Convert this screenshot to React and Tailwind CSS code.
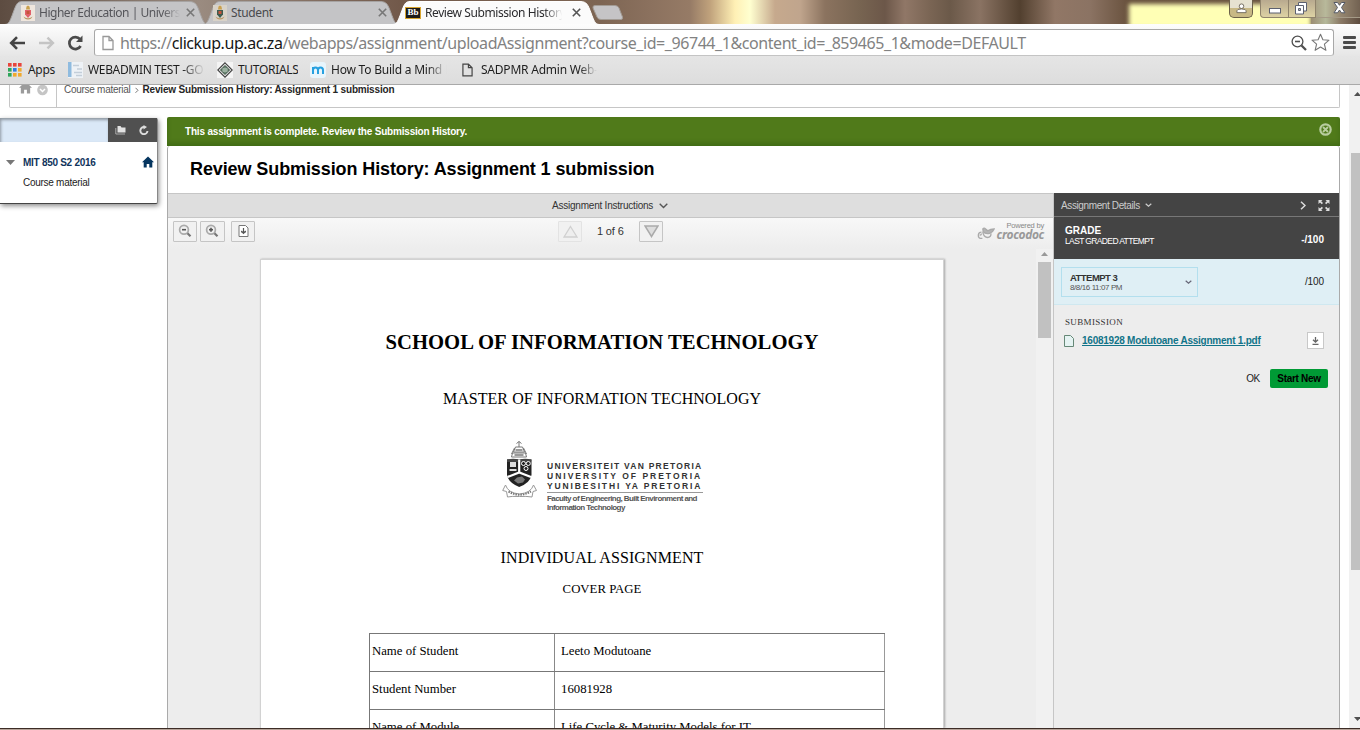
import React from "react";

const arial = "font-['Liberation_Sans',Arial,sans-serif]";
const times = "font-['Liberation_Serif',serif]";

function Tab({ width, active, icon, label, labelClass, closeClass, className }) {
  return (
    <div className={`relative h-[23px] shrink-0 ${className}`} style={{ width }}>
      <svg className="absolute inset-0" width={width} height="24" viewBox={`0 0 ${width} 24`}>
        <path
          d={`M0 23.5 C4 23 5 20 8 12 C11 4 12 0.5 17 0.5 H${width - 19} C${width - 12} 0.5 ${width - 11} 4 ${width - 8} 12 C${width - 5} 20 ${width - 4} 23 ${width} 23.5 Z`}
          fill={active ? "#fbfbfb" : "#c4c4c6"}
          stroke={active ? "#ffffff" : "#a6a3a2"}
        />
      </svg>
      <div className="relative flex h-full items-center pl-[16px]">
        {icon}
        <span className={`ml-[4px] overflow-hidden whitespace-nowrap text-[12px] leading-[18px] ${labelClass}`}>{label}</span>
        <svg className={closeClass} width="9" height="9" viewBox="0 0 9 9" stroke={active ? "#555" : "#777"} strokeWidth="1.6">
          <path d="M0.8 0.8 L8.2 8.2 M8.2 0.8 L0.8 8.2" />
        </svg>
      </div>
    </div>
  );
}

function CrestIcon({ body, bg }) {
  return (
    <svg className="shrink-0" width="14" height="16" viewBox="0 0 14 16">
      <rect width="14" height="16" fill={bg} />
      <path d="M5.500 1.500 L7 .5 L8.500 1.500 L9 4.500 H5Z" fill="#c9a04d" />
      <path d="M4 5 h6 v4.500 l-3 3.500 l-3-3.500z" fill={body} />
      <path d="M5.500 6 h3 v3 h-3z" fill="#c4553a" />
      <path d="M2.500 11.500 q1 3 4.500 3 q3.500 0 4.500-3 l-1.500 1 q-3 1.500-6 0z" fill="#b99868" />
    </svg>
  );
}

function PageIcon({ w = 12, h = 15, stroke = "#777", fill = "none" }) {
  return (
    <svg className="shrink-0" width={w} height={h} viewBox="0 0 12 15" fill={fill} stroke={stroke} strokeWidth="1.3">
      <path d="M1 1 H7 L11 5 V14 H1 Z M7 1 V5 H11" />
    </svg>
  );
}

function TitleBar() {
  return (
    <div className="relative flex h-6 shrink-0 items-start overflow-hidden bg-[linear-gradient(90deg,#5d4c41_0px,#9a8b80_200px,#72594a_400px,#7d6553_600px,#8b715e_650px,#967b66_690px,#c0a27c_710px,#fff0b5_735px,#ffffd0_750px,#c6a98d_775px,#c0a58d_800px,#8b735f_825px,#776451_860px,#6c5749_885px,#907767_905px,#7a6554_930px,#6b5949_950px,#8a7363_980px,#52402f_1020px,#917766_1055px,#8b7363_1090px,#69523e_1128px,#65503d_1360px)] pl-[5px] pt-px">
      <div className="absolute left-[1129px] top-[4px] h-[24px] w-[182px] bg-[#ffffb5] blur-[2px]" />
      <div className="absolute right-0 top-0 h-[24px] w-[49px] bg-[linear-gradient(90deg,#9b8d73,#b4b89a_30%,#8b7a66_60%,#5d4b3e)]" />
      <Tab width={203} className="mr-[-5px]" icon={<CrestIcon body="#e0606a" bg="#efe6dd" />} label="Higher Education | Univers" labelClass="w-[141px] tracking-[-0.48px] text-[#55555a] [mask-image:linear-gradient(90deg,#000_88%,transparent)]" closeClass="ml-[6px]" />
      <Tab width={196} className="mr-[-6px]" icon={<div className="-ml-[6px]"><CrestIcon body="#3d5c50" bg="#d8d2c8" /></div>} label="Student" labelClass="w-[141px] tracking-[-0.35px] text-[#4a4a4d]" closeClass="ml-[6px]" />
      <Tab
        width={206}
        active
        className="z-10"
        icon={
          <div className={`-ml-[4px] flex h-[12px] w-[16px] shrink-0 items-center justify-center border border-[#d8a52e] bg-[#1c1a18] text-[9px] font-bold leading-none text-white ${times}`}>Bb</div>
        }
        label="Review Submission History"
        labelClass="w-[140px] tracking-[-0.42px] text-[#2b2b2e] [mask-image:linear-gradient(90deg,#000_85%,transparent_98%)]"
        closeClass="ml-[7px]"
      />
      <svg className="-ml-[8px] mt-[4px] shrink-0" width="34" height="17" viewBox="0 0 34 17">
        <path d="M4 0.500 H24 Q27 0.500 28 3 L31.500 12 Q32 14.500 30 14.500 H10 Q7 14.500 6 12 L2 3 Q1.500 0.500 4 0.500Z" fill="#c5c4c6" stroke="#a29b94" />
      </svg>
      <div className="absolute right-0 top-0 flex h-[18px]">
        <div className="mr-[7px] flex h-[18px] w-6 items-center justify-center rounded-b-[5px] border border-t-0 border-[#6b6049] bg-[linear-gradient(#e6e2d0_45%,#c8b985_50%)]">
          <svg className="mb-px" width="11" height="11" viewBox="0 0 12 12" fill="#fff" stroke="#6c6659" strokeWidth="1">
            <circle cx="6" cy="3.500" r="2.500" /><path d="M1 10.500 V8.500 Q1 6.500 6 6.500 Q11 6.500 11 8.500 V10.500 Z" />
          </svg>
        </div>
        <div className="flex h-[18px] w-[29px] items-end justify-center rounded-bl-[4px] border border-t-0 border-[#8f836c] bg-[linear-gradient(#b8a98f,#ddd2a4)] pb-[3px]">
          <svg width="12" height="6" viewBox="0 0 12 6"><rect x=".5" y=".5" width="11" height="4.500" fill="#fff" stroke="#5c6070" /></svg>
        </div>
        <div className="flex h-[18px] w-[27px] items-center justify-center border-b border-r border-[#8f836c] bg-[linear-gradient(#b8a98f,#ddd2a4)] pb-px pr-[2px]">
          <svg width="12" height="13" viewBox="0 0 12 13" fill="#fff" stroke="#5c6070"><path d="M3.500 .5 H11.500 V9 H3.500Z" /><path d="M.5 3.500 H8.500 V12 H.5Z" /><path d="M3.500 6.500 h2 v2 h-2z" fill="#bbb" /></svg>
        </div>
        <div className="flex h-[18px] w-[44px] items-center justify-center border-b border-[#a59a87] bg-[#c9bda0]/20 pb-[2px] pl-[3px]">
          <svg width="13" height="12" viewBox="0 0 13 12" fill="#fff" stroke="#555a66"><path d="M1 .5 H4.500 L6.500 3.300 L8.500 .5 H12 L8.500 5.500 L12 10.800 H8.500 L6.500 8 L4.500 10.800 H1 L4.500 5.500Z" /></svg>
        </div>
      </div>
    </div>
  );
}

function AddressBar() {
  return (
    <div className="flex h-[32px] shrink-0 items-end bg-[linear-gradient(#fdfdfd,#e6e6e6)]">
      <div className="flex h-[27px] w-[94px] shrink-0 items-center pl-[9px]">
        <svg width="17" height="14" viewBox="0 0 17 14" fill="none" stroke="#444" strokeWidth="2.600"><path d="M16 7 H2.500 M8 1.200 L2.200 7 L8 12.800" /></svg>
        <svg className="ml-[13px]" width="16" height="14" viewBox="0 0 17 14" fill="none" stroke="#c4c4c4" strokeWidth="2.600"><path d="M0 7 H14 M9 1.200 L14.800 7 L9 12.800" /></svg>
        <svg className="ml-[12px]" width="17" height="16" viewBox="0 0 17 16" fill="none" stroke="#4a4a4a" strokeWidth="2.700"><path d="M13.600 11 A6 6 0 1 1 13 4.200" /><path d="M15.500 0.500 V7 H9Z" fill="#4a4a4a" stroke="none" /></svg>
      </div>
      <div className="flex h-[27px] w-[1240px] shrink-0 items-center rounded-[3px] border border-[#a8a8a8] border-b-[#c4c4c4] bg-white pl-[7px] pr-[3px]">
        <PageIcon stroke="#999" w={12} h={16} />
        <span className="ml-[6px] flex-1 whitespace-nowrap text-[16px] leading-[24px] tracking-[-0.43px] text-[#828282]">
          https://<span className="text-[#161616]">clickup.up.ac.za</span>/webapps/assignment/uploadAssignment?course_id=_96744_1&amp;content_id=_859465_1&amp;mode=DEFAULT
        </span>
        <svg width="16" height="16" viewBox="0 0 16 16" fill="none" stroke="#505050"><circle cx="6.500" cy="6.500" r="5.400" strokeWidth="1.300" /><path d="M4 6.500 H9" strokeWidth="1.600" /><path d="M10.500 10.500 L15 15" strokeWidth="2.300" /></svg>
        <svg className="ml-[4px]" width="19" height="19" viewBox="0 0 19 19" fill="#fff" stroke="#777" strokeWidth="1.100" strokeLinejoin="round"><path d="M9.500 1.200 L11.900 6.800 L18 7.200 L13.400 11.200 L14.900 17.300 L9.500 14 L4.100 17.300 L5.600 11.200 L1 7.200 L7.100 6.800Z" /></svg>
      </div>
      <div className="flex h-[27px] items-center pl-[9px]">
        <svg width="13" height="13" viewBox="0 0 13 13" fill="#4b4b4b"><rect width="13" height="3" rx="1" /><rect y="5" width="13" height="3" rx="1" /><rect y="10" width="13" height="3" rx="1" /></svg>
      </div>
    </div>
  );
}

const appDots = ["#e8453c", "#e8453c", "#e8453c", "#2ea65a", "#2f7de1", "#f0a92e", "#2ea65a", "#f0a92e", "#f0a92e"];

function Bookmarks() {
  const item = "overflow-hidden whitespace-nowrap text-[12px] leading-[18px]";
  return (
    <div className="flex h-[29px] shrink-0 items-center border-b border-[#a9a9a9] bg-[linear-gradient(#e5e5e5,#dddddd)] pl-[8px] text-[#1e1e1e]">
      <svg width="14" height="14" viewBox="0 0 14 14">
        {appDots.map((c, i) => <rect key={i} x={(i % 3) * 5} y={Math.floor(i / 3) * 5} width="3.600" height="3.600" fill={c} />)}
      </svg>
      <span className={`ml-[6px] w-[28px] tracking-[-0.3px] ${item}`}>Apps</span>
      <svg className="ml-[12px] shrink-0" width="15" height="16" viewBox="0 0 15 16"><rect width="15" height="16" fill="#eef2f6" /><rect width="3.500" height="15" fill="#8fbbdf" /><path d="M5 3.500 h6 M9 7 h5 M6 10.500 h8 M8 13.500 h6" stroke="#c3ced9" strokeWidth="1.500" /></svg>
      <span className={`ml-[5px] w-[117px] tracking-[-0.34px] [mask-image:linear-gradient(90deg,#000_80%,transparent)] ${item}`}>WEBADMIN TEST -GO</span>
      <svg className="ml-[12px] shrink-0" width="16" height="16" viewBox="0 0 16 16"><rect width="16" height="16" fill="#f4f4f4" /><path d="M8 .8 L15.200 8 L8 15.200 L.8 8Z" fill="#f3f3f3" stroke="#444" strokeWidth="1.200" /><path d="M8 3.500 L12.500 8 L8 12.500 L3.500 8Z" fill="#6d8b76" stroke="#2f4437" /><path d="M5.500 7 h5 M5.500 9 h5" stroke="#dfe8e1" strokeWidth=".8" /></svg>
      <span className={`ml-[5px] w-[60px] tracking-[-0.3px] ${item}`}>TUTORIALS</span>
      <svg className="ml-[12px] shrink-0" width="16" height="16" viewBox="0 0 16 16"><rect width="16" height="16" rx="3" fill="#e8f5fc" /><path d="M3 12 V5 M3 8 Q3 5.500 5.500 5.500 Q8 5.500 8 8 V12 M8 8 Q8 5.500 10.500 5.500 Q13 5.500 13 8 V12" fill="none" stroke="#26a0e0" strokeWidth="2" /></svg>
      <span className={`ml-[5px] w-[118px] tracking-[-0.22px] [mask-image:linear-gradient(90deg,#000_82%,transparent_98%)] ${item}`}>How To Build a Mind M</span>
      <div className="ml-[13px]"><PageIcon w={11} h={14} stroke="#444" /></div>
      <span className={`ml-[8px] w-[116px] tracking-[-0.22px] [mask-image:linear-gradient(90deg,#000_85%,transparent)] ${item}`}>SADPMR Admin Web-</span>
    </div>
  );
}

function HomeIcon({ color, size = 12 }) {
  return (
    <svg width={size} height={size} viewBox="0 0 12 12" fill={color}><path d="M6 0.500 L12 6.300 H10.300 V11.500 H7.300 V8 H4.700 V11.500 H1.700 V6.300 H0Z" /></svg>
  );
}

function Breadcrumb() {
  return (
    <div className="ml-[9px] flex h-[23px] w-[1331px] overflow-hidden rounded-b-[2px] border border-t-0 border-[#c6c6c6] bg-white">
      <div className="flex w-[47px] items-start border-r border-[#c6c6c6] pl-[9px]">
        <div className="-mt-[4px]"><HomeIcon color="#9b9b9b" size={13} /></div>
        <svg className="ml-[5px]" width="11" height="11" viewBox="0 0 11 11"><circle cx="5.500" cy="5" r="5.300" fill="#c5c5c5" /><path d="M3 4 L5.500 6.500 L8 4" fill="none" stroke="#fff" strokeWidth="1.500" /></svg>
      </div>
      <div className="flex h-[10px] items-center pl-[7px] text-[10px] leading-[12px]">
        <span className="whitespace-nowrap tracking-[-0.27px] text-[#555]">Course material</span>
        <svg className="mx-[4px]" width="4" height="7" viewBox="0 0 4 7" fill="none" stroke="#777"><path d="M.5 .8 L3 3.300 L.5 5.800" /></svg>
        <span className="whitespace-nowrap font-bold tracking-[-0.18px] text-[#262626]">Review Submission History: Assignment 1 submission</span>
      </div>
    </div>
  );
}

function Sidebar() {
  return (
    <div className="mt-px h-[86px] w-[158px] shrink-0 rounded-r-[2px] border-b border-r border-b-[#444] border-r-[#888] bg-white shadow-[1px_2px_5px_rgba(0,0,0,0.45)]">
      <div className="flex h-6">
        <div className="w-[108px] bg-[#dae8f7] shadow-[inset_1px_2px_3px_rgba(0,0,0,0.35)]" />
        <div className="flex flex-1 items-center bg-[#505050] pl-[7px]">
          <svg className="mb-px" width="11" height="10" viewBox="0 0 11 10" fill="#e2e2e2"><path d="M2.500 1 H5.500 L6.500 2.500 H10.500 V7.500 H2.500Z" /><path d="M.8 3 V9 H10" fill="none" stroke="#aaa" /></svg>
          <svg className="ml-[13px]" width="10" height="10" viewBox="0 0 10 10" fill="none" stroke="#ddd" strokeWidth="1.900"><path d="M8.500 6 A3.600 3.600 0 1 1 5 2" /><path d="M4.500 0 L8 2 L4.500 4.500Z" fill="#ddd" stroke="none" /></svg>
        </div>
      </div>
      <div className="mt-[12px] flex h-[17px] items-center pl-[6px]">
        <svg width="9" height="5" viewBox="0 0 9 5"><path d="M0 0 H9 L4.500 5Z" fill="#777" /></svg>
        <span className="ml-[8px] flex-1 whitespace-nowrap text-[10px] font-bold tracking-[-0.28px] text-[#10345c]">MIT 850 S2 2016</span>
        <div className="mb-px mr-[3px]"><HomeIcon color="#05355f" size={12} /></div>
      </div>
      <div className="mt-[4px] pl-[23px] text-[10px] leading-[15px] tracking-[-0.27px] text-[#222]">Course material</div>
    </div>
  );
}

function ToolButton({ width, faded, children }) {
  return (
    <div className={`flex h-[21px] items-center justify-center rounded-[1px] border bg-[#f1f1f1] ${faded ? "border-[#e3e3e3]" : "border-[#c5c5c5]"}`} style={{ width }}>
      {children}
    </div>
  );
}

function Magnifier({ plus }) {
  return (
    <svg className="-ml-px -mt-px" width="14" height="14" viewBox="0 0 14 14" fill="none"><circle cx="6" cy="5.700" r="4.400" fill="#f0f0f0" stroke="#aaa" strokeWidth="1.700" /><path d="M4 5.700 H8" stroke="#555" strokeWidth="1.600" />{plus && <path d="M6 3.700 V7.700" stroke="#555" strokeWidth="1.600" />}<path d="M9.500 9.200 L12.500 12.200" stroke="#777" strokeWidth="2.200" /></svg>
  );
}

function UniversityCrest() {
  return (
    <svg className="shrink-0" width="36" height="58" viewBox="0 0 36 58">
      <g fill="none" stroke="#777" strokeWidth="1">
        <path d="M17 0.500 V6 M14.500 2.500 L17 .5 L19.500 2.500 M13.500 6 H20.500 L22.500 11 H11.500Z M10.500 12 H23.500 L24.500 16 H9.500Z M12.500 7 L9.500 13 M21.500 7 L24.500 13" />
        <path d="M13.500 9 H20.500 M12.500 14 H21.500" strokeWidth="2" stroke="#999" />
      </g>
      <path d="M5 18.500 H29.500 V34 Q28 42 17.200 46 Q6.500 42 5 34Z" fill="#222" />
      <path d="M5 18.500 Q11 17 17.200 18.500 Q23 17 29.500 18.500 L29 21 H5Z" fill="#444" />
      <path d="M8 21 h6 v5 h-6z M7.500 28 h7 v2 h-7z" fill="#ddd" />
      <circle cx="21.500" cy="22.500" r="2" stroke="#fff" fill="none" /><circle cx="26.300" cy="22.500" r="2" stroke="#fff" fill="none" /><circle cx="24" cy="27.500" r="2" stroke="#fff" fill="none" />
      <path d="M5.500 36 L17.200 31.500 L29 36 M17.200 18.500 V32" stroke="#fff" strokeWidth="2.200" fill="none" />
      <path d="M12 39.500 l3-3 5-1 3 3 -2 3 -5 1z" fill="#777" />
      <path d="M3.500 44 Q6 52 17.500 53 Q29 52 31.500 44 L34.500 49.500 L31 50.500 L30 56 Q24 55 17.500 55.500 Q10 55 5.500 56 L4.500 50.500 L0.700 49.500Z" fill="#fff" stroke="#999" />
      <path d="M6.500 50.500 Q17 57 29 50.500" fill="none" stroke="#777" strokeWidth="2" strokeDasharray="1.500 1" />
    </svg>
  );
}

function UniversityLogo() {
  return (
    <div className="mt-[31px] flex h-[75px] pl-[241px]">
      <UniversityCrest />
      <div className={`ml-[9px] mt-[20px] w-[156px] text-[#333] ${arial}`}>
        <div className="flex flex-col border-b border-[#999] pb-px text-[8.500px] font-bold leading-[10px]">
          <span className="whitespace-nowrap tracking-[1.24px]">UNIVERSITEIT VAN PRETORIA</span>
          <span className="whitespace-nowrap tracking-[2px]">UNIVERSITY OF PRETORIA</span>
          <span className="whitespace-nowrap tracking-[1.84px]">YUNIBESITHI YA PRETORIA</span>
        </div>
        <div className="mt-px whitespace-nowrap text-[8px] font-bold leading-[9px] tracking-[-0.58px] text-[#555]">
          Faculty of Engineering, Built Environment and
          <br />
          Information Technology
        </div>
      </div>
    </div>
  );
}

const rows = [
  ["Name of Student", "Leeto Modutoane"],
  ["Student Number", "16081928"],
  ["Name of Module", "Life Cycle & Maturity Models for IT"],
];

function DocumentPage() {
  return (
    <div className={`ml-[92px] h-[469px] w-[684px] overflow-hidden border border-b-0 border-[#d2d2d2] bg-white text-black shadow-[1px_0_2px_rgba(0,0,0,0.3)] ${times}`}>
      <div className="mt-[69px] whitespace-nowrap text-center text-[20.670px] font-bold leading-[26px]">SCHOOL OF INFORMATION TECHNOLOGY</div>
      <div className="mt-[33px] whitespace-nowrap text-center text-[16px] leading-[22px] tracking-[0.05px]">MASTER OF INFORMATION TECHNOLOGY</div>
      <UniversityLogo />
      <div className="mt-[31px] whitespace-nowrap text-center text-[16px] leading-[22px] tracking-[0.1px]">INDIVIDUAL ASSIGNMENT</div>
      <div className="mt-[11px] whitespace-nowrap text-center text-[12.800px] leading-[18px]">COVER PAGE</div>
      <div className="ml-[108px] mt-[35px] w-[516px] border-l border-t border-[#777]">
        {rows.map(([name, value]) => (
          <div key={name} className="flex h-[38px] border-b border-[#777] text-[12.750px] leading-[34px]">
            <div className="w-[185px] whitespace-nowrap border-r border-[#888] pl-[2px]">{name}</div>
            <div className="flex-1 whitespace-nowrap border-r border-[#999] pl-[6px]">{value}</div>
          </div>
        ))}
      </div>
    </div>
  );
}

function Crocodoc() {
  return (
    <div className="mr-[9px] mt-[4px] flex w-[67px] shrink-0 items-start justify-between text-[#999]">
      <svg className="mt-[4px] shrink-0" width="18" height="14" viewBox="0 0 20 15" fill="none" stroke="#aaa" strokeWidth="1.500"><path d="M6 13.500 Q1 14 1.500 9.500 Q2 6.500 5 6.500 M3 10 Q5 10 5 8" /><path d="M6.500 3 Q8 1 10 3.500 L12 5 Q15 3 19 3 Q18 6 14 8 Q9 9 7 6Z" fill="#b5b5b5" /><path d="M6.500 6 Q7 12 11.500 12.500 Q16 12 15.500 8" /></svg>
      <div className="flex shrink-0 flex-col items-end">
        <span className="whitespace-nowrap text-[7.500px] leading-[8px] tracking-[-0.2px] text-[#888]">Powered by</span>
        <span className="font-['Open_Sans',sans-serif] text-[12px] font-bold italic leading-[10px] tracking-[-0.4px] text-[#999]">crocodoc</span>
      </div>
    </div>
  );
}

function Viewer() {
  return (
    <div className="flex w-[886px] shrink-0 flex-col border-r border-[#c6c6c6] bg-[#ededed]">
      <div className="flex h-[25px] shrink-0 items-center border-y border-[#c6c6c6] bg-[#dedede] pb-px pl-[384px] text-[10px] text-[#333]">
        <span className="whitespace-nowrap tracking-[-0.22px]">Assignment Instructions</span>
        <svg className="ml-[6px] mt-px" width="9" height="6" viewBox="0 0 9 6" fill="none" stroke="#555" strokeWidth="1.400"><path d="M.7 .7 L4.500 4.500 L8.300 .7" /></svg>
      </div>
      <div className="flex h-[31px] shrink-0 items-start bg-[linear-gradient(#f8f8f8,#ededed)]">
        <div className="flex h-full w-[390px] gap-[3px] pl-[5px] pt-[3px]">
          <ToolButton width={24}><Magnifier /></ToolButton>
          <ToolButton width={25}><Magnifier plus /></ToolButton>
          <div className="ml-[3px]"><ToolButton width={24}>
            <svg className="-mt-px" width="11" height="12" viewBox="0 0 11 12" fill="#fff" stroke="#777"><path d="M1 .5 H7.500 L10 3 V11.500 H1Z" /><path d="M5.500 3 V8 M3.300 6 L5.500 8.300 L7.700 6 M3 7 H8" fill="none" stroke="#555" strokeWidth="1.200" /></svg>
          </ToolButton></div>
        </div>
        <div className="flex h-[24px] flex-1 items-center pt-[3px]">
          <ToolButton width={24} faded><svg width="15" height="13" viewBox="0 0 15 13" fill="#eee" stroke="#d0d0d0" strokeWidth="1.300"><path d="M7.500 1.500 L14 12 H1Z" /></svg></ToolButton>
          <span className="ml-[15px] w-[27px] whitespace-nowrap text-[11px] tracking-[-0.15px] text-[#333]">1 of 6</span>
          <div className="ml-[15px]"><ToolButton width={24}><svg className="-mt-px" width="15" height="13" viewBox="0 0 15 13" fill="#ddd" stroke="#aaa" strokeWidth="1.500"><path d="M1 1 H14 L7.500 11.500Z" /></svg></ToolButton></div>
        </div>
        <Crocodoc />
      </div>
      <div className="flex min-h-0 flex-1">
        <div className="w-[868px] overflow-hidden pt-[10px]"><DocumentPage /></div>
        <div className="flex flex-1 flex-col items-center bg-[#f1f1f1] pt-[3px]">
          <svg width="7" height="4" viewBox="0 0 7 4"><path d="M0 4 L3.500 0 L7 4Z" fill="#999" /></svg>
          <div className="mt-[6px] h-[76px] w-[13px] bg-[#c1c1c1]" />
        </div>
      </div>
    </div>
  );
}

function DetailsPanel() {
  return (
    <div className="flex flex-1 flex-col bg-[#ededed]">
      <div className="flex h-[24px] items-center border-b border-[#777] bg-[#444] pl-[7px] pr-[9px] text-[10px] text-[#ccc]">
        <span className="mt-px whitespace-nowrap tracking-[-0.38px]">Assignment Details</span>
        <svg className="ml-[5px] mt-px" width="7" height="5" viewBox="0 0 7 5" fill="none" stroke="#ccc" strokeWidth="1.200"><path d="M.7 .7 L3.500 3.300 L6.300 .7" /></svg>
        <svg className="ml-auto mt-px" width="6" height="9" viewBox="0 0 6 9" fill="none" stroke="#ddd" strokeWidth="1.500"><path d="M1 .7 L5 4.500 L1 8.300" /></svg>
        <svg className="ml-[12px] mt-px" width="12" height="11" viewBox="0 0 12 11" fill="#ddd"><path d="M.5 0 H4.500 L3.200 1.300 L5 3.100 L3.800 4.200 L2 2.500 L.5 4Z M11.500 0 H7.500 L8.800 1.300 L7 3.100 L8.200 4.200 L10 2.500 L11.500 4Z M.5 11 H4.500 L3.200 9.700 L5 7.900 L3.800 6.800 L2 8.500 L.5 7Z M11.500 11 H7.500 L8.800 9.700 L7 7.900 L8.200 6.800 L10 8.500 L11.500 7Z" /></svg>
      </div>
      <div className="flex h-[42px] items-start bg-[#444] pl-[11px] pr-[15px] text-white">
        <div className="flex-1 pt-[8px]">
          <div className="text-[10px] font-bold leading-[11px]">GRADE</div>
          <div className="whitespace-nowrap text-[8.500px] leading-[10px] tracking-[-0.63px]">LAST GRADED ATTEMPT</div>
        </div>
        <span className="mt-[16px] text-[10px] font-bold leading-[14px]">-/100</span>
      </div>
      <div className="flex h-[46px] items-start border-b border-[#cfe8f0] bg-[#dfeff5] pl-[7px] pr-[15px] pt-[8px]">
        <div className="flex h-[30px] w-[137px] items-center border border-[#b3dfee] pl-[8px] pr-[5px]">
          <div className="flex-1 whitespace-nowrap">
            <div className="text-[9.500px] font-bold leading-[11px] tracking-[-0.55px] text-[#333]">ATTEMPT 3</div>
            <div className="text-[8px] leading-[10px] tracking-[-0.4px] text-[#555]">8/8/16 11:07 PM</div>
          </div>
          <svg width="7" height="5" viewBox="0 0 7 5" fill="none" stroke="#667" strokeWidth="1.200"><path d="M.7 .7 L3.500 3.300 L6.300 .7" /></svg>
        </div>
        <span className="ml-auto mt-[8px] text-[10px] leading-[14px] tracking-[-0.1px] text-[#222]">/100</span>
      </div>
      <div className={`mt-[11px] pl-[11px] text-[9px] leading-[12px] tracking-[0.35px] text-[#333] ${times}`}>SUBMISSION</div>
      <div className="mt-[4px] flex h-[17px] items-center pl-[10px] pr-[15px]">
        <svg width="10" height="12" viewBox="0 0 10 12" fill="#e5f3f2" stroke="#687"><path d="M.5 .5 H6.500 L9.500 3.500 V11.500 H.5Z" /></svg>
        <span className="ml-[8px] flex-1 whitespace-nowrap text-[10px] font-bold tracking-[-0.24px] text-[#117489] underline">16081928 Modutoane Assignment 1.pdf</span>
        <div className="flex h-[17px] w-[17px] items-center justify-center border border-[#c8c8c8] bg-white">
          <svg width="7" height="8" viewBox="0 0 7 8" fill="none" stroke="#666" strokeWidth="1.300"><path d="M3.500 0 V5 M1 2.700 L3.500 5.200 L6 2.700 M.5 7.300 H6.500" /></svg>
        </div>
      </div>
      <div className="mt-[20px] flex h-[19px] items-center justify-end pr-[11px] text-[10px]">
        <span className="mr-[10px] tracking-[-0.3px] text-[#222]">OK</span>
        <button className="h-[19px] w-[58px] whitespace-nowrap rounded-[2px] bg-[#009a35] font-bold tracking-[-0.3px] text-black">Start New</button>
      </div>
    </div>
  );
}

function MainPanel() {
  return (
    <div className="ml-[9px] flex h-[611px] w-[1173px] flex-col">
      <div className="flex h-[29px] shrink-0 items-center rounded-t-[2px] bg-[#507a1a] pl-[18px] pr-[8px] shadow-[inset_0_-3px_5px_rgba(0,50,0,0.2)]">
        <span className="flex-1 whitespace-nowrap text-[10px] font-bold tracking-[-0.19px] text-white">This assignment is complete. Review the Submission History.</span>
        <svg className="mb-[4px]" width="13" height="13" viewBox="0 0 13 13"><circle cx="6.500" cy="6.500" r="5.200" fill="none" stroke="#b8cd9f" strokeWidth="2.200" /><path d="M4 4 L9 9 M9 4 L4 9" stroke="#b8cd9f" strokeWidth="1.800" /></svg>
      </div>
      <div className="flex min-h-0 flex-1 flex-col rounded-t-[3px] border-x border-x-[#aaa]">
        <div className="h-[47px] shrink-0 whitespace-nowrap pl-[22px] text-[18px] font-bold leading-[46px] tracking-[-0.1px] text-black">Review Submission History: Assignment 1 submission</div>
        <div className="flex min-h-0 flex-1"><Viewer /><DetailsPanel /></div>
      </div>
    </div>
  );
}

export default function App() {
  return (
    <div className="flex h-[730px] w-[1360px] flex-col overflow-hidden bg-white font-['Noto_Sans','Open_Sans',sans-serif]">
      <TitleBar />
      <AddressBar />
      <Bookmarks />
      <div className={`flex h-[643px] shrink-0 overflow-hidden ${arial}`}>
        <div className="w-[1349px] shrink-0">
          <Breadcrumb />
          <div className="mt-[9px] flex items-start"><Sidebar /><MainPanel /></div>
        </div>
        <div className="flex flex-1 flex-col bg-[#f1f1f1] pl-[2px]">
          <svg className="ml-[3px] mt-[7px]" width="7" height="4" viewBox="0 0 7 4"><path d="M0 4 L3.500 0 L7 4Z" fill="#505050" /></svg>
          <div className="mt-[57px] h-[417px] bg-[#c1c1c1]" />
          <svg className="ml-[3px] mt-[147px]" width="7" height="4" viewBox="0 0 7 4"><path d="M0 0 L3.500 4 L7 0Z" fill="#505050" /></svg>
        </div>
      </div>
      <div className="h-[2px] shrink-0 border-t border-[#3c2c26] bg-[#b6a398]" />
    </div>
  );
}
